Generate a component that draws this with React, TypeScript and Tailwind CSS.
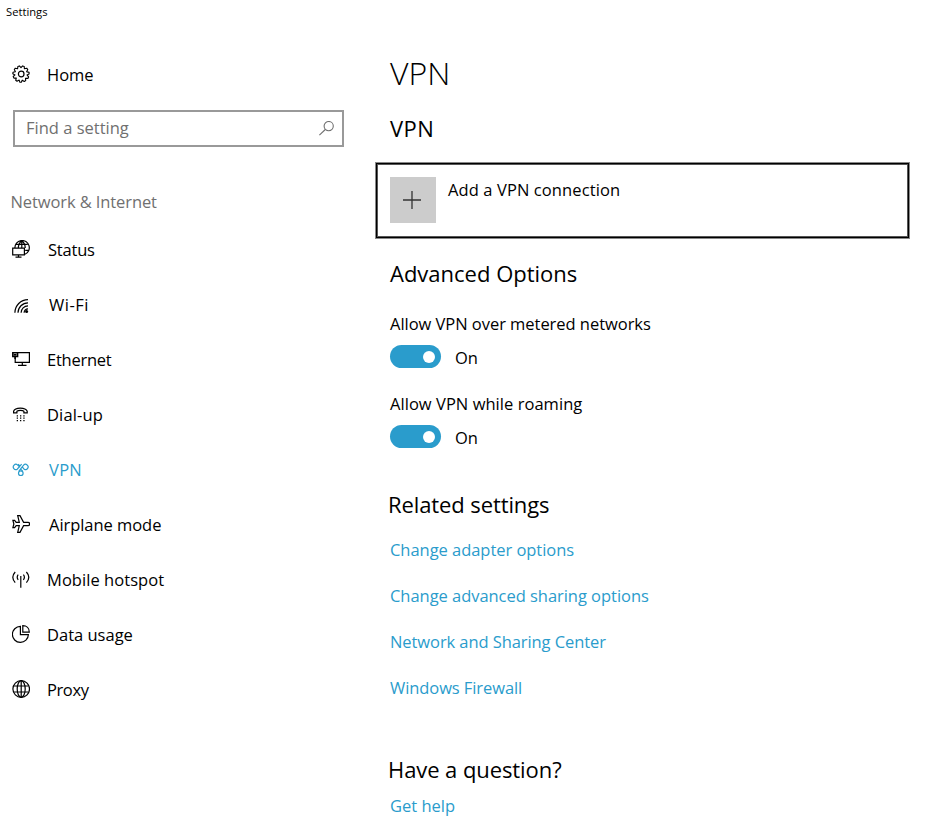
import type { ReactNode } from 'react'
import clsx from 'clsx'

interface NavItem {
  label: string
  icon: ReactNode
  className: string
  active?: boolean
}

interface LinkItem {
  label: string
  className: string
}

function Icon({ children }: { children: ReactNode }) {
  return (
    <svg
      width="18"
      height="18"
      viewBox="0 0 18 18"
      fill="none"
      stroke="currentColor"
      strokeWidth="1.2"
      className="mb-px shrink-0"
    >
      {children}
    </svg>
  )
}

function GearIcon() {
  return (
    <Icon>
      <circle cx="9.2" cy="9" r="2.8" />
      <path
        strokeWidth="1.1"
        strokeLinejoin="round"
        d="M7.4.9 9 2.6 10.6.9 12.2 1.4 12.4 3.8 14.7 3.2 15.8 4.6 14.6 6.7 17.1 7.4V9L15 9.9 16.6 11.9 15.9 13.4 13.5 13.2 13.7 15.6 12.3 16.5 10.2 15.2 9.3 17.3H7.9L7.2 15.1 5 16.3 3.7 15.3 4.3 13 1.9 13.1 1.2 11.5 3 9.9.8 8.8 1 7.2 3.4 6.7 2.3 4.5 3.3 3.2 5.6 3.8 5.9 1.4Z"
      />
    </Icon>
  )
}

const NAV_ITEMS: NavItem[] = [
  {
    label: 'Status',
    className: 'tracking-[-0.2px]',
    icon: (
      <Icon>
        <path d="M2.9 8A7.2 7.2 0 1 1 13 14.3M3.9 4.4H15.7M13.2 10.4H16.3M9.8.7C7.4 2.6 6.4 5 6.3 8M9.8.7C12.4 2.8 13.3 5 13.2 8M9.8.7V8" />
        <path d="M.7 8.2H12.4V14.9H.7ZM6.5 15V17.2M3.5 17.2H9.5" />
      </Icon>
    ),
  },
  {
    label: 'Wi-Fi',
    className: 'ml-px tracking-[0.5px]',
    icon: (
      <Icon>
        <path d="M2.9 17.8A13.2 13.2 0 0 1 16 4.6M6 17.8A10 10 0 0 1 16 7.8M9.1 17.8A6.9 6.9 0 0 1 16 10.9M12.1 17.8A3.9 3.9 0 0 1 16 13.9" />
        <circle cx="14.6" cy="16.5" r="1.5" fill="currentColor" stroke="none" />
      </Icon>
    ),
  },
  {
    label: 'Ethernet',
    className: '-ml-px tracking-[-0.25px]',
    icon: (
      <Icon>
        <path d="M6 2.7H17.4V12.4H3.2V7M10.3 12.4V15.4M6 15.4H14.5" />
        <path strokeWidth="1.5" d="M.8 2.8H5.6V6.6H.8ZM1.8 4.7H4.5M3.1 6.6V9" />
      </Icon>
    ),
  },
  {
    label: 'Dial-up',
    className: '-ml-px tracking-[0.15px]',
    icon: (
      <Icon>
        <path d="M1.6 6.3C3 2 13.6 2 15.2 6.3V7.9H11.9V6.2C10.5 5.2 6.3 5.2 4.9 6.2V7.9H1.6Z" />
        <path d="M4.7 10.8H6M8 10.8H9.3M11.3 10.8H12.6M4.7 13.2H6M8 13.2H9.3M11.3 13.2H12.6M4.7 15.6H6M8 15.6H9.3M11.3 15.6H12.6" />
      </Icon>
    ),
  },
  {
    label: 'VPN',
    className: 'ml-px tracking-[0.3px]',
    active: true,
    icon: (
      <Icon>
        <path d="M6.9 11.2 11.6 5.2A2.6 2.6 0 1 1 12.2 9.2L10.4 7.2M7.9 7.4 5.5 4.9A2.6 2.6 0 1 0 5.2 9.2L9.6 4.2M10.6 11.2 8.2 8.7M6.2 4.2 7.6 5.6" />
        <circle cx="8.8" cy="13.2" r="2.3" />
      </Icon>
    ),
  },
  {
    label: 'Airplane mode',
    className: 'ml-px tracking-[-0.05px]',
    icon: (
      <Icon>
        <path d="M5.7.7H8L11.6 7.4H16A1.5 1.5 0 0 1 16 10.6H11.6L8 17.3H5.7L7.3 10.6H4.2L2.6 12.6H.9L1.9 9 .9 5.4H2.6L4.2 7.4H7.3Z" />
      </Icon>
    ),
  },
  {
    label: 'Mobile hotspot',
    className: '-ml-px tracking-[0.05px]',
    icon: (
      <Icon>
        <path d="M8.8 6V17.8M6.2 4.7Q4.2 7.2 6.2 9.8M11.4 4.7Q13.4 7.2 11.4 9.8M3.2 2Q-1.6 7.2 3.2 12.6M14.4 2Q19.2 7.2 14.4 12.6" />
      </Icon>
    ),
  },
  {
    label: 'Data usage',
    className: '-ml-px',
    icon: (
      <Icon>
        <path d="M8.4 1.4A8 8 0 1 0 16.4 9.6H8.4Z" />
        <path d="M10.8.7V7.2H17.3C17.3 3.4 14.6.7 10.8.7Z" />
      </Icon>
    ),
  },
  {
    label: 'Proxy',
    className: '-ml-px tracking-[-0.4px]',
    icon: (
      <Icon>
        <circle cx="9.2" cy="9" r="8.3" />
        <ellipse cx="9.2" cy="9" rx="4" ry="8.3" />
        <path d="M9.2.7V17.3M1.8 6H16.6M1.8 12H16.6" />
      </Icon>
    ),
  },
]

const RELATED_LINKS: LinkItem[] = [
  { label: 'Change adapter options', className: 'tracking-[-0.04px]' },
  { label: 'Change advanced sharing options', className: 'tracking-[-0.04px]' },
  { label: 'Network and Sharing Center', className: 'tracking-[-0.08px]' },
  { label: 'Windows Firewall', className: 'tracking-[-0.08px]' },
]

function Toggle({ label, className }: { label: string; className?: string }) {
  return (
    <div className="h-20">
      <p className={clsx('w-max leading-6', className)}>{label}</p>
      <div className="mt-[9px] flex items-center">
        <div className="flex h-[23px] w-[51px] items-center justify-end rounded-full bg-[#2a9ccc] pr-1.5">
          <div className="size-3 rounded-full bg-white" />
        </div>
        <span className="mt-px -mb-px ml-3.5 leading-[23px]">On</span>
      </div>
    </div>
  )
}

function Sidebar() {
  return (
    <aside className="w-[375px] shrink-0">
      <div className="mt-[27px] flex h-[47px] items-center gap-[18px] pl-3">
        <GearIcon />
        <span className="mt-0.5 -ml-px">Home</span>
      </div>
      <div className="mt-3 ml-[13px] flex h-[37px] w-[331px] items-center justify-between border-2 border-[#999] pr-2 pl-[11px] text-[#707070]">
        <span>Find a setting</span>
        <svg width="16" height="16" viewBox="0 0 16 16" fill="none" stroke="currentColor" strokeWidth="1.1">
          <circle cx="10.7" cy="5.1" r="4.6" />
          <path d="M7.3 8.5 1.4 14.2" />
        </svg>
      </div>
      <h2 className="mt-[43px] pl-[10.5px] leading-6 tracking-[-0.1px] text-[#707070]">Network &amp; Internet</h2>
      <nav className="mt-2">
        {NAV_ITEMS.map(item => (
          <div
            key={item.label}
            className={clsx('flex h-[55px] items-center gap-[18px] pl-3', item.active && 'text-[#2a9ccc]')}
          >
            {item.icon}
            <span className={clsx('mt-0.5', item.className)}>{item.label}</span>
          </div>
        ))}
      </nav>
    </aside>
  )
}

export default function App() {
  return (
    <div className="h-[833px] w-[931px] overflow-hidden bg-white font-['Open_Sans',sans-serif] text-[16.5px] text-black">
      <header className="h-6 pl-1.5 text-[11.2px] leading-6">Settings</header>
      <div className="flex">
        <Sidebar />
        <main className="flex-1">
          <h1 className="mt-[27px] ml-[15px] w-max text-[32px] leading-[44px] font-[350]">VPN</h1>
          <h2 className="mt-[17px] ml-[15px] w-max text-[22px] leading-8 tracking-[0.4px]">VPN</h2>
          <div className="mt-[18px] flex h-[77px] w-[535px] border border-[#888] py-3.5 pl-3.5 shadow-[inset_0_0_0_1px_#000,inset_0_0_0_2px_#555]">
            <div className="flex size-[46px] items-center justify-center bg-[#ccc] pr-0.5">
              <svg width="18" height="18" viewBox="0 0 18 18" fill="none" stroke="#333" strokeWidth="1.3">
                <path d="M9 0V18M0 9H18" />
              </svg>
            </div>
            <span className="ml-3 leading-[26px] tracking-[0.1px]">Add a VPN connection</span>
          </div>
          <div className="pl-[15px]">
            <h2 className="mt-[18px] mb-[23px] w-max text-[22px] leading-8">Advanced Options</h2>
            <Toggle label="Allow VPN over metered networks" className="tracking-[-0.04px]" />
            <Toggle label="Allow VPN while roaming" className="tracking-[0.04px]" />
            <h2 className="mt-4 -ml-0.5 w-max text-[22px] leading-8 tracking-[-0.1px]">Related settings</h2>
            <ul className="mt-[7px] text-[#2a9ccc]">
              {RELATED_LINKS.map(link => (
                <li key={link.label} className="flex h-[46px] items-center">
                  <a className={link.className}>{link.label}</a>
                </li>
              ))}
            </ul>
            <h2 className="mt-[42px] -ml-0.5 w-max text-[22px] leading-8 tracking-[-0.08px]">Have a question?</h2>
            <a className="mt-[9px] block w-max leading-6 text-[#2a9ccc]">Get help</a>
          </div>
        </main>
      </div>
    </div>
  )
}
